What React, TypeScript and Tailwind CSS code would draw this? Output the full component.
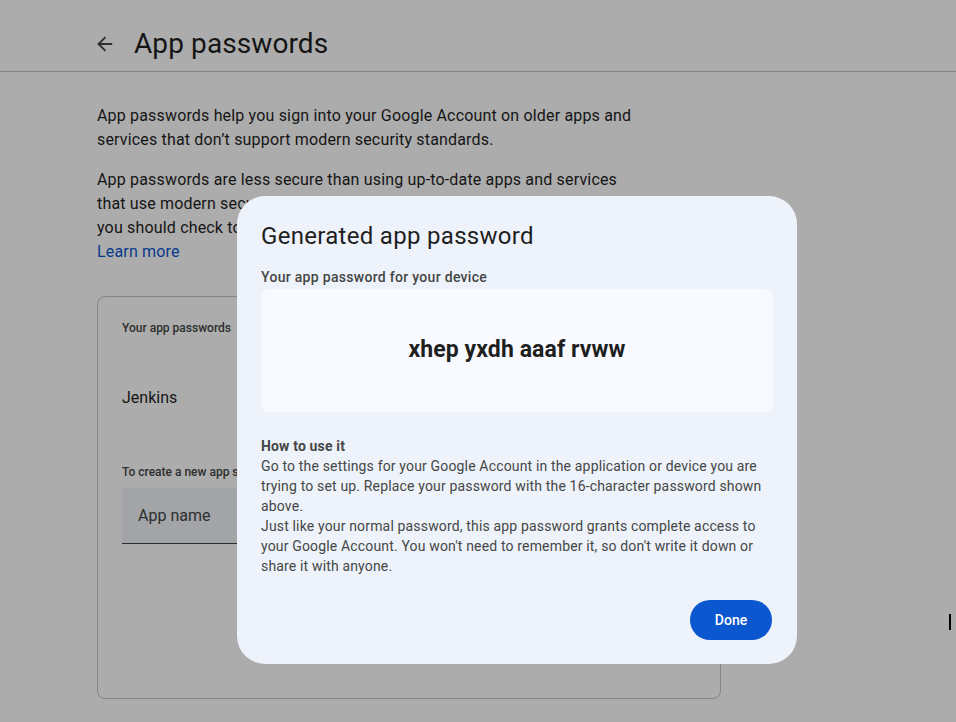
import { ArrowLeft } from 'lucide-react'

function PageBody() {
  return (
    <div className="min-h-[722px] bg-white text-[#1f1f1f]">
      <header className="flex h-[72px] items-start border-b border-[#c4c7c5] pl-[94px] pt-[26px]">
        <ArrowLeft className="mr-[18px] mt-[7px] h-[22px] w-[22px] text-[#444746]" strokeWidth={2} />
        <h1 className="text-[28px] leading-9 tracking-[0.1px] text-[#1f1f1f]">App passwords</h1>
      </header>
      <main className="w-[640px] pl-[97px] pt-[32px] text-base leading-6 tracking-[0.17px] text-[#1f1f1f]">
        <p>
          App passwords help you sign into your Google Account on older apps and services that don’t support
          modern security standards.
        </p>
        <p className="mt-4">
          App passwords are less secure than using up-to-date apps and services that use modern security
          standards. Before you create an app password, you should check to see if your app needs this in order
          to sign in.
        </p>
        <a className="block text-[#0b57d0]">Learn more</a>
        <section className="mt-[32px] h-[403px] w-[624px] rounded-lg border border-[#c4c7c5] px-6 pt-[23px] tracking-normal">
          <p className="text-xs font-medium text-[#444746]">Your app passwords</p>
          <p className="mt-[50px] text-base">Jenkins</p>
          <p className="mt-[54px] text-xs font-medium text-[#444746]">
            To create a new app specific password, type a name for it below...
          </p>
          <div className="mt-[8px] flex h-14 w-[300px] items-center rounded-t border-b border-[#444746] bg-[#f0f4f9] px-4 text-[#444746]">
            App name
          </div>
        </section>
      </main>
    </div>
  )
}

export default function App() {
  return (
    <div className="relative h-[722px] w-[956px] overflow-hidden font-['Roboto',sans-serif]">
      <PageBody />
      <div className="absolute inset-0 bg-black/[0.325]" />
      <div className="absolute left-[237px] top-[196px] flex h-[468px] w-[560px] flex-col rounded-[28px] bg-[#eef2fa] px-6 pt-[24px] text-[#1f1f1f]">
        <h2 className="text-2xl leading-8 tracking-[0.3px]">Generated app password</h2>
        <p className="mt-[15px] text-sm font-medium leading-5 tracking-[0.3px] text-[#444746]">
          Your app password for your device
        </p>
        <div className="mt-[2px] flex h-[123px] items-center justify-center rounded-lg bg-[#f8faff]">
          <span className="text-[23px] font-bold tracking-[0.1px] text-[#1f1f1f]">xhep yxdh aaaf rvww</span>
        </div>
        <div className="mt-6 text-sm leading-5 tracking-[0.16px] text-[#444746]">
          <p className="font-bold">How to use it</p>
          <p>
            Go to the settings for your Google Account in the application or device you are trying to set up.
            Replace your password with the 16-character password shown above.
          </p>
          <p>
            Just like your normal password, this app password grants complete access to your Google Account. You
            won't need to remember it, so don't write it down or share it with anyone.
          </p>
        </div>
        <div className="mb-6 mt-auto flex justify-end">
          <button className="mr-px h-10 w-[82px] rounded-full bg-[#0b57d0] text-sm font-medium text-white">
            Done
          </button>
        </div>
      </div>
      <div className="absolute left-[949px] top-[614px] h-4 w-[2px] bg-black" />
    </div>
  )
}
